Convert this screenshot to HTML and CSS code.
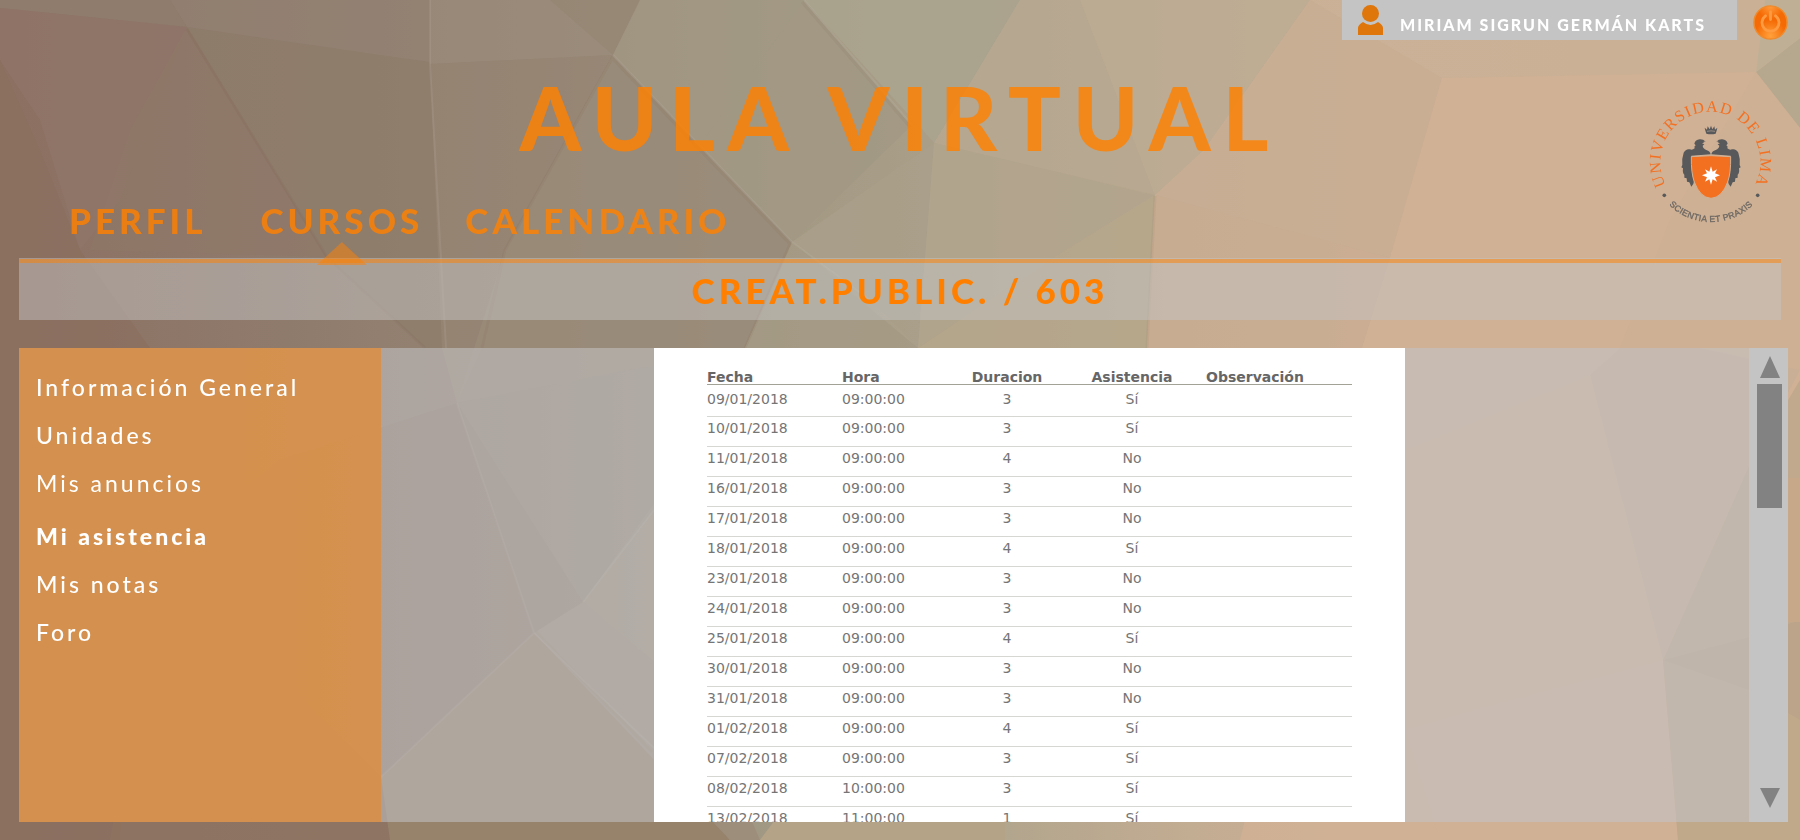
FILE: index.html
```html
<!DOCTYPE html>
<html lang="es">
<head>
<meta charset="utf-8">
<title>Aula Virtual</title>
<link rel="stylesheet" href="styles.css">
</head>
<body>
<svg class="backdrop" viewBox="0 0 1800 840" preserveAspectRatio="none" aria-hidden="true">
  <defs>
    <linearGradient id="base" x1="0" y1="0" x2="1" y2="0">
      <stop offset="0" stop-color="#8c7062"/>
      <stop offset=".16" stop-color="#8f7b6c"/>
      <stop offset=".3" stop-color="#978674"/>
      <stop offset=".42" stop-color="#a19883"/>
      <stop offset=".55" stop-color="#b1a58d"/>
      <stop offset=".66" stop-color="#c2ac92"/>
      <stop offset=".76" stop-color="#cbaf94"/>
      <stop offset="1" stop-color="#ccae92"/>
    </linearGradient>
  </defs>
  <rect width="1800" height="840" fill="url(#base)"/>
  <g>
    <polygon points="0,0 170,0 187,27 0,8" fill="#8f7c6c"/>
    <polygon points="0,8 187,27 120,200 80,250 40,120 0,60" fill="#90756a" opacity=".7"/>
    <polygon points="0,60 40,150 80,250 150,348 120,840 0,840" fill="#8b6e5e" opacity=".6"/>
    <polygon points="187,27 327,257 90,250 130,130" fill="#8f7768" opacity=".7"/>
    <polygon points="187,27 430,62 442,348 425,348 327,257" fill="#8e7d6c" opacity=".8"/>
    <polygon points="170,0 430,0 430,62 187,27" fill="#938273" opacity=".7"/>
    <polygon points="430,0 550,0 613,55 430,64" fill="#9a8b7c" opacity=".7"/>
    <polygon points="430,64 613,55 505,250 482,348 442,348" fill="#958473" opacity=".7"/>
    <polygon points="550,0 640,0 613,55" fill="#968775" opacity=".8"/>
    <polygon points="640,0 804,0 912,125 792,242 613,55" fill="#a19884" opacity=".75"/>
    <polygon points="613,55 792,242 745,348 457,403 505,250" fill="#998b79" opacity=".9"/>
    <polygon points="804,0 1020,0 934,143" fill="#aaa38e" opacity=".9"/>
    <polygon points="804,0 934,143 792,242 700,145" fill="#a39883" opacity=".3"/>
    <polygon points="792,242 934,143 918,348 870,300" fill="#a99f8a" opacity=".8"/>
    <polygon points="792,242 860,300 918,348 745,348" fill="#a49a84" opacity=".8"/>
    <polygon points="1020,0 1080,0 1155,195 934,143" fill="#b7a891" opacity=".8"/>
    <polygon points="934,143 1155,195 1055,257 918,348" fill="#b1a48d" opacity=".9"/>
    <polygon points="1155,195 1147,348 918,348 1055,257" fill="#b5a68b" opacity=".9"/>
    <polygon points="1080,0 1310,0 1204,150 1155,195" fill="#bcab93" opacity=".8"/>
    <polygon points="1310,0 1442,78 1390,258 1155,195 1204,150" fill="#c8ae94" opacity=".8"/>
    <polygon points="1310,0 1800,0 1756,72 1442,78" fill="#cab197" opacity=".9"/>
    <polygon points="1155,195 1390,258 1362,348 1147,348" fill="#c9ad92" opacity=".8"/>
    <polygon points="1442,78 1756,72 1800,128 1800,420 1663,660 1678,840 1240,840 1362,348 1390,258" fill="#d2b196" opacity=".75"/>
    <polygon points="1756,72 1800,38 1800,128" fill="#b6a88f"/>
    <polygon points="1765,0 1800,0 1800,38 1756,72" fill="#bfb095"/>
    <polygon points="1756,72 1670,220 1620,348 1800,370 1800,128" fill="#cdaf94" opacity=".7"/>
    <polygon points="457,403 534,633 381,777 160,560 280,460" fill="#8d7869" opacity=".5"/>
    <polygon points="457,403 583,602 534,633" fill="#928070" opacity=".7"/>
    <polygon points="457,403 745,348 654,510 583,602" fill="#96887a" opacity=".6"/>
    <polygon points="442,348 482,348 457,403" fill="#9b8d7b" opacity=".7"/>
    <polygon points="583,602 660,495 760,600 740,840 654,748" fill="#a19582" opacity=".5"/>
    <polygon points="534,633 654,748 730,840 390,840 381,777" fill="#97836c"/>
    <polygon points="534,633 583,602 700,700 760,840 730,840" fill="#9d8e7c"/>
    <polygon points="160,560 381,777 390,840 110,840" fill="#8d7360" opacity=".8"/>
    <polygon points="760,840 790,800 1005,800 1005,840" fill="#b4a387"/>
    <polygon points="1590,375 1663,660 1749,466 1800,370 1700,348 1620,348" fill="#c9af95"/>
    <polygon points="1405,348 1620,348 1590,375 1405,450" fill="#cbb198"/>
    <polygon points="1663,660 1749,466 1800,380 1800,620 1749,637" fill="#c1a98d"/>
    <polygon points="1663,660 1749,637 1800,620 1800,840 1678,840" fill="#bba48a"/>
    <polygon points="1788,478 1800,478 1800,622 1788,622" fill="#c7a98a"/>
    <polygon points="1663,660 1749,690 1800,720 1800,840 1678,840" fill="#c0a98b"/>
    <polygon points="1480,708 1663,660 1678,840 1440,840 1405,730" fill="#d0b097" opacity=".6"/>
  </g>
  <g fill="none" stroke="#fff" stroke-opacity=".07" stroke-width="2">
    <path d="M613 55 792 242 870 300M804 0 912 125M457 403 534 633 654 748M534 633 381 777M583 602 654 510M430 0V64L446 348"/>
  </g>
  <g fill="none" stroke="#5a4030" stroke-opacity=".05" stroke-width="3">
    <path d="M611 57 790 244 745 348M187 29 327 257 425 348M802 2 910 127M613 57 505 250 482 348M1155 196 1147 348M536 632 652 752"/>
  </g>
</svg>

<div class="page">
  <header>
    <div class="topbar">
      <div class="user">
        <svg class="user-icon" viewBox="0 0 25 30" aria-hidden="true">
          <circle cx="12.500" cy="8.500" r="8.500"/>
          <path d="M5 17Q12.500 23 20 17Q25 20 25 23V30H0V23Q0 20 5 17Z"/>
        </svg>
        <span>MIRIAM SIGRUN GERMÁN KARTS</span>
      </div>
      <button class="power" type="button" aria-label="Cerrar sesión">
        <svg viewBox="0 0 35 35" aria-hidden="true">
          <defs>
            <radialGradient id="glowLow" cx=".5" cy=".92" r=".5"><stop offset="0" stop-color="#ffa13c"/><stop offset="1" stop-color="#ffa13c" stop-opacity="0"/></radialGradient>
            <radialGradient id="glowTop" cx=".5" cy="0" r=".4"><stop offset="0" stop-color="#ff9a3a"/><stop offset="1" stop-color="#ff9a3a" stop-opacity="0"/></radialGradient>
          </defs>
          <circle cx="17.500" cy="17.500" r="16.500" fill="#f56a04" stroke="#ee8a2c" stroke-width="1.500"/>
          <circle cx="17.500" cy="17.500" r="16" fill="url(#glowLow)"/>
          <circle cx="17.500" cy="17.500" r="16" fill="url(#glowTop)"/>
          <path d="M12.500 10.800A8.500 8.500 0 1 0 22.500 10.800M17.500 7V14.500" fill="none" stroke="#ff9b41" stroke-width="2.800" stroke-linecap="round"/>
        </svg>
      </button>
    </div>

    <div class="masthead">
      <h1>AULA VIRTUAL</h1>
      <nav class="tabs" aria-label="Principal">
        <a href="#perfil">PERFIL</a>
        <a href="#cursos" class="current">CURSOS</a>
        <a href="#calendario">CALENDARIO</a>
      </nav>
      <svg class="crest" viewBox="0 0 420 420" role="img" aria-label="Universidad de Lima">
        <defs>
          <path id="arcTop" d="M69 272A150 150 0 1 1 347 272"/>
          <path id="arcBottom" d="M39 270A179 179 0 0 0 381 270"/>
        </defs>
        <text class="crest-name"><textPath href="#arcTop" startOffset="50%">UNIVERSIDAD DE LIMA</textPath></text>
        <text class="crest-motto"><textPath href="#arcBottom" startOffset="50%">SCIENTIA ET PRAXIS</textPath></text>
        <g fill="#58595b">
          <circle cx="70" cy="316" r="5.500"/>
          <circle cx="350" cy="316" r="5.500"/>
          <path d="M196 131Q192 120 191 113L198 119 200 109 206 118 210 107 214 118 220 109 222 119 229 113Q228 120 224 131Q210 135 196 131Z"/>
          <path d="M198 124Q210 121 222 124" fill="none" stroke="#b9a696" stroke-width="2"/>
          <path id="eagle" d="M209 193Q207 183 196 180Q186 176 185 167L190 163 183 160 190 157Q184 153 194 155Q186 147 176 148Q163 149 160 161L164 166Q158 169 161 175Q154 181 147 178Q135 175 128 188Q122 205 124 225L121 232 126 235Q124 250 130 254L130 263 137 265 138 275 145 277 151 290Q158 285 159 274L151 197Z"/>
          <use href="#eagle" transform="matrix(-1 0 0 1 420 0)"/>
        </g>
        <path d="M151 200Q210 194 269 200Q270 249 260 276Q243 323 210 325Q177 323 160 276Q150 249 151 200Z" fill="#f37021" stroke="#d0b297" stroke-width="3"/>
        <path d="M210 229 215 245 228 238 222 250 237 256 222 262 228 275 215 268 210 284 205 268 192 275 198 262 183 256 198 250 192 238 205 245Z" fill="#fff"/>
      </svg>
    </div>
  </header>

  <h2 class="course">CREAT.PUBLIC. / 603</h2>

  <main class="panel">
    <nav class="menu" aria-label="Curso">
      <a href="#informacion">Información General</a>
      <a href="#unidades">Unidades</a>
      <a href="#anuncios" class="thin">Mis anuncios</a>
      <a href="#asistencia" class="active">Mi asistencia</a>
      <a href="#notas">Mis notas</a>
      <a href="#foro">Foro</a>
    </nav>
    <div class="content">
      <div class="sheet">
        <table>
          <colgroup><col class="c-date"><col class="c-time"><col class="c-length"><col class="c-present"><col></colgroup>
          <thead><tr><th>Fecha</th><th>Hora</th><th class="mid">Duracion</th><th class="mid">Asistencia</th><th class="note">Observación</th></tr></thead>
          <tbody>
            <tr><td>09/01/2018</td><td>09:00:00</td><td class="mid">3</td><td class="mid">Sí</td><td></td></tr>
            <tr><td>10/01/2018</td><td>09:00:00</td><td class="mid">3</td><td class="mid">Sí</td><td></td></tr>
            <tr><td>11/01/2018</td><td>09:00:00</td><td class="mid">4</td><td class="mid">No</td><td></td></tr>
            <tr><td>16/01/2018</td><td>09:00:00</td><td class="mid">3</td><td class="mid">No</td><td></td></tr>
            <tr><td>17/01/2018</td><td>09:00:00</td><td class="mid">3</td><td class="mid">No</td><td></td></tr>
            <tr><td>18/01/2018</td><td>09:00:00</td><td class="mid">4</td><td class="mid">Sí</td><td></td></tr>
            <tr><td>23/01/2018</td><td>09:00:00</td><td class="mid">3</td><td class="mid">No</td><td></td></tr>
            <tr><td>24/01/2018</td><td>09:00:00</td><td class="mid">3</td><td class="mid">No</td><td></td></tr>
            <tr><td>25/01/2018</td><td>09:00:00</td><td class="mid">4</td><td class="mid">Sí</td><td></td></tr>
            <tr><td>30/01/2018</td><td>09:00:00</td><td class="mid">3</td><td class="mid">No</td><td></td></tr>
            <tr><td>31/01/2018</td><td>09:00:00</td><td class="mid">3</td><td class="mid">No</td><td></td></tr>
            <tr><td>01/02/2018</td><td>09:00:00</td><td class="mid">4</td><td class="mid">Sí</td><td></td></tr>
            <tr><td>07/02/2018</td><td>09:00:00</td><td class="mid">3</td><td class="mid">Sí</td><td></td></tr>
            <tr><td>08/02/2018</td><td>10:00:00</td><td class="mid">3</td><td class="mid">Sí</td><td></td></tr>
            <tr><td>13/02/2018</td><td>11:00:00</td><td class="mid">1</td><td class="mid">Sí</td><td></td></tr>
          </tbody>
        </table>
      </div>
    </div>
    <div class="scroller">
      <button type="button" aria-label="Subir"><svg viewBox="0 0 20 22"><path d="M10 0 20 22H0Z"/></svg></button>
      <div class="track"><div class="thumb"></div></div>
      <button type="button" aria-label="Bajar"><svg viewBox="0 0 20 20"><path d="M0 0H20L10 20Z"/></svg></button>
    </div>
  </main>
</div>
</body>
</html>
```
FILE: styles.css
```css
* { box-sizing: border-box; }

body {
  margin: 0;
  background: #b1a48d;
  font-family: Lato, "Open Sans", sans-serif;
}

a { color: inherit; text-decoration: none; }

button {
  display: block;
  padding: 0;
  border: 0;
  background: none;
  cursor: pointer;
}

button svg { display: block; }

.backdrop {
  position: fixed;
  inset: 0;
  z-index: -1;
  width: 100%;
  height: 100%;
}

.page {
  display: flex;
  flex-direction: column;
  height: 100vh;
  padding: 0 12px 18px 19px;
}

.topbar {
  display: flex;
  justify-content: flex-end;
  gap: 16px;
}

.user {
  display: flex;
  align-items: flex-start;
  gap: 17px;
  width: 395px;
  height: 40px;
  padding: 5px 16px;
  background: #c4c4c4;
  color: #fff;
  font-size: 16px;
  font-weight: 900;
  line-height: 39px;
  letter-spacing: 2px;
  white-space: nowrap;
}

.user-icon { flex: none; width: 25px; height: 30px; fill: #de760c; }

.power { padding-top: 5px; }
.power svg { width: 35px; height: 35px; }

.masthead {
  display: grid;
  grid-template-columns: 140px 1fr 140px;
  margin-right: 7px;
  padding: 26px 0 13px;
  color: rgba(255, 128, 0, .82);
}

h1 {
  grid-column: 2;
  grid-row: 1;
  margin: 0;
  font-size: 88px;
  font-weight: 900;
  line-height: 102px;
  letter-spacing: 12px;
  text-align: center;
}

.tabs {
  display: flex;
  grid-column: 1 / 3;
  grid-row: 2;
  gap: 42px;
  margin-top: 27px;
  padding-left: 50px;
  font-size: 35px;
  font-weight: 900;
  line-height: 50px;
  letter-spacing: 4px;
}

.current { position: relative; margin-left: 12px; }

.current::after {
  content: "";
  position: absolute;
  top: 47px;
  left: 50%;
  width: 50px;
  height: 23px;
  margin-left: -25px;
  background: rgba(255, 128, 0, .5);
  clip-path: polygon(50% 0, 100% 100%, 0 100%);
}

.crest {
  grid-column: 3;
  grid-row: 1 / 3;
  width: 140px;
  height: 140px;
  margin-top: 24px;
}

.crest text { text-anchor: middle; }

.crest-name {
  font-family: "Liberation Serif", serif;
  font-size: 48px;
  letter-spacing: 4px;
  fill: #f37021;
}

.crest-motto {
  font-family: "Liberation Sans", sans-serif;
  font-size: 26px;
  letter-spacing: 1px;
  fill: #6d6863;
  stroke: #6d6863;
  stroke-width: 1px;
}

.course {
  margin: 0 7px 28px 0;
  padding-top: 2px;
  border-top: 1px solid rgba(196, 196, 196, .5);
  background: linear-gradient(rgba(255, 128, 0, .5) 4px, transparent 4px) rgba(196, 196, 196, .5);
  background-clip: padding-box;
  color: #ff8000;
  font-size: 35px;
  font-weight: 900;
  line-height: 59px;
  letter-spacing: 4px;
  text-align: center;
}

.panel {
  display: flex;
  flex: 1;
  min-height: 0;
}

.menu {
  display: flex;
  flex: none;
  flex-direction: column;
  align-items: flex-start;
  gap: 16px;
  width: 362px;
  padding: 23px 17px;
  background: rgba(217, 146, 76, .93);
  color: #fff;
  font-size: 23px;
  font-weight: 500;
  line-height: 32px;
  letter-spacing: 3px;
}

.menu .thin { font-weight: 400; }
.menu .active { margin-top: 5px; font-weight: 900; }

.content {
  flex: 1;
  overflow: hidden;
  background: rgba(196, 196, 200, .54);
}

.sheet {
  width: 751px;
  max-width: 100%;
  margin: 0 auto;
  padding: 22px 53px 0;
  background: #fff;
}

.content { padding-right: 71px; }

table {
  width: 100%;
  border-collapse: collapse;
  table-layout: fixed;
  color: #757575;
  font-family: "DejaVu Sans", sans-serif;
  font-size: 14px;
  line-height: 14px;
}

.c-date { width: 135px; }
.c-time { width: 100px; }
.c-length { width: 130px; }
.c-present { width: 120px; }

th, td { padding: 0; text-align: left; }
th { height: 14px; border-bottom: 1px solid #a2a297; color: #666; }
td { height: 30px; padding: 4px 0; border-bottom: 1px solid #d6d6d2; vertical-align: top; }
tbody tr:first-child td { height: 32px; padding-top: 7px; }
.mid { text-align: center; }
.note { padding-left: 14px; }

.scroller {
  display: flex;
  flex: none;
  flex-direction: column;
  align-items: center;
  gap: 6px;
  width: 39px;
  padding: 8px 0 14px 2px;
  background: #c4c4c4;
}

.scroller svg { width: 20px; fill: #828282; }
.track { flex: 1; }
.thumb { width: 25px; height: 124px; background: #828282; }
```
